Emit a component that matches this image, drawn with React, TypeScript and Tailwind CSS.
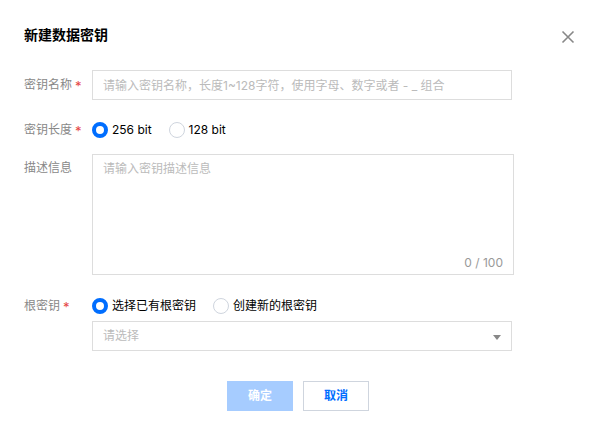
import React, { useState } from 'react';

const font = { fontFamily: 'Inter, "Noto Sans CJK SC", sans-serif' };

const Label = ({ text, required }: { text: string; required?: boolean }) => (
  <div className="w-[68px] shrink-0 h-[20px] text-[12px] text-[#888888] leading-[20px]">
    {text}
    {required && <span className="relative top-[2px] text-[#e54545] ml-[3px] text-[13px] leading-none">*</span>}
  </div>
);

const Radio = ({ checked, label, onClick }: { checked: boolean; label: string; onClick: () => void }) => (
  <label onClick={onClick} className="flex items-center h-[20px] cursor-pointer mr-[17px]">
    <span
      className={`w-[16px] h-[16px] rounded-full box-border mr-[4px] ${checked ? 'border-[4px] border-[#006eff] bg-white' : 'border border-[#cfd5de] bg-white'}`}
    />
    <span className="text-[12px] text-black leading-[20px]">{label}</span>
  </label>
);

export default function App() {
  const [bits, setBits] = useState('256');
  const [root, setRoot] = useState('exist');

  return (
    <div className="w-[596px] h-[435px] bg-white relative" style={font}>
      <div className="pl-[24px] pt-[25px]">
        <div className="text-[14px] font-bold text-black leading-[20px]">新建数据密钥</div>

        <div className="flex items-center mt-[25px]">
          <Label text="密钥名称" required />
          <input
            className="w-[420px] h-[30px] border border-[#dddddd] px-[10px] text-[12px] outline-none placeholder:text-[#bbbbbb]"
            placeholder="请输入密钥名称，长度1~128字符，使用字母、数字或者 - _ 组合"
          />
        </div>

        <div className="flex items-center h-[20px] mt-[20px]">
          <Label text="密钥长度" required />
          <Radio checked={bits === '256'} label="256 bit" onClick={() => setBits('256')} />
          <Radio checked={bits === '128'} label="128 bit" onClick={() => setBits('128')} />
        </div>

        <div className="flex items-start mt-[14px]">
          <div className="pt-[4px]">
            <Label text="描述信息" />
          </div>
          <div className="relative w-[422px] h-[121px] border border-[#dddddd]">
            <textarea
              className="w-full h-full resize-none px-[10px] py-[5px] text-[12px] outline-none placeholder:text-[#bbbbbb]"
              placeholder="请输入密钥描述信息"
            />
            <span className="absolute right-[10px] bottom-[2px] text-[12px] text-[#999999]">0 / 100</span>
          </div>
        </div>

        <div className="flex items-center h-[20px] mt-[21px]">
          <Label text="根密钥" required />
          <Radio checked={root === 'exist'} label="选择已有根密钥" onClick={() => setRoot('exist')} />
          <Radio checked={root === 'new'} label="创建新的根密钥" onClick={() => setRoot('new')} />
        </div>

        <div className="flex mt-[5px]">
          <div className="w-[68px] shrink-0" />
          <div className="relative w-[420px] h-[30px] border border-[#dddddd] flex items-center px-[10px]">
            <span className="text-[12px] text-[#bbbbbb]">请选择</span>
            <span className="absolute right-[10px] top-[13px] w-0 h-0 border-l-[4px] border-r-[4px] border-t-[5px] border-l-transparent border-r-transparent border-t-[#888888]" />
          </div>
        </div>
      </div>

      <div className="flex justify-center gap-[10px] mt-[30px]">
        <button className="w-[66px] h-[30px] bg-[#a6ccff] text-white text-[12px] font-bold cursor-not-allowed">
          确定
        </button>
        <button className="w-[66px] h-[30px] bg-white border border-[#cfd5de] text-[#006eff] text-[12px] font-bold">
          取消
        </button>
      </div>

      <button className="absolute right-[20px] top-[29px] w-[16px] h-[16px] text-[#888888]">
        <svg viewBox="0 0 16 16" width="16" height="16" fill="none" stroke="currentColor" strokeWidth="1.6">
          <path d="M2.5 2.5 L13.5 13.5 M13.5 2.5 L2.5 13.5" />
        </svg>
      </button>
    </div>
  );
}
